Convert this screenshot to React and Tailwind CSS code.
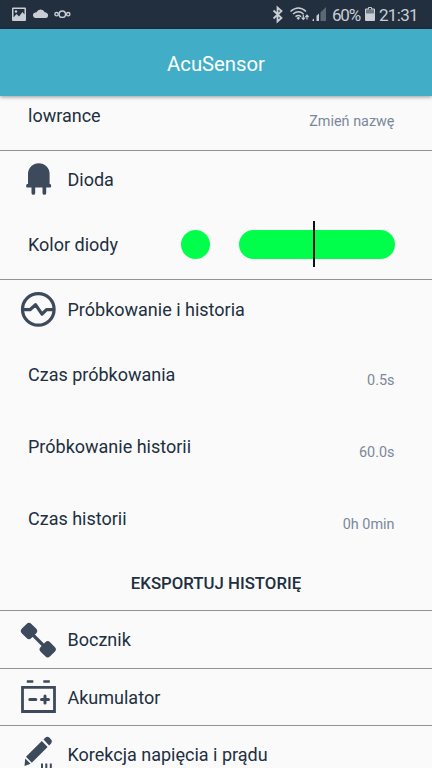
import React from 'react';

const StatusBar = () => (
  <div className="flex h-[29px] shrink-0 items-center justify-between bg-[#212f3f] pl-3 pr-[13px] text-[#c9ced4]">
    <svg className="h-[29px] w-[60px]" viewBox="12 0 60 29" fill="none">
      <path
        fillRule="evenodd"
        fill="#c9ced4"
        d="M13 7.500h12a1 1 0 0 1 1 1V20a1 1 0 0 1-1 1H13a1 1 0 0 1-1-1V8.500a1 1 0 0 1 1-1zM13.500 9v8.500l3-3.500 2.500 2.500 3.500-4.500 2 2.500V9z"
      />
      <circle cx="16" cy="11.500" r="1.200" fill="#c9ced4" />
      <path
        fill="#c9ced4"
        d="M35 18a2.800 2.800 0 0 1-.5-5.200 3 3 0 0 1 2-.6 4.600 4.600 0 0 1 8.300 0c1.700.3 3.200 1.300 3.300 3a2.600 2.600 0 0 1-2.100 2.800z"
      />
      <g stroke="#c9ced4" strokeWidth="1.400">
        <circle cx="62.300" cy="14.200" r="3.200" />
        <circle cx="56.600" cy="14.200" r="1.700" />
        <circle cx="68.200" cy="14.200" r="1.700" />
      </g>
    </svg>
    <div className="flex items-center">
      <svg className="h-[29px] w-[56px]" viewBox="271 0 56 29" fill="none" stroke="#c9ced4">
        <path strokeWidth="1.800" d="M273.500 10.500l8 7.500-4 3.500v-14l4 3.500-8 7.500" />
        <g strokeWidth="1.500">
          <path d="M290.500 11.500q8-7 15.500 0" />
          <path d="M293 14q5.500-4.500 10.500 0" />
          <path d="M295.500 16.700q3-2.400 5.500 0" />
        </g>
        <path fill="#c9ced4" stroke="none" d="M296.500 18l2-1.200 1.500 1.200-1.700 2z" />
        <path strokeWidth="1.200" d="M303.300 14.500v5M301.600 17.700l1.700 1.800 1.700-1.800M307 19.500v-4.300M305.400 17l1.600-1.800 1.600 1.800" />
        <path fill="#5b6772" stroke="none" d="M320.500 12.500l5.500-5.500v14h-5.500z" />
        <path fill="#c9ced4" stroke="none" d="M312.500 21v-1.300l1.500-1.200V21zM316.500 21v-5.300l2.500-2.200V21z" />
      </svg>
      <span className="ml-[5px] w-[29px] whitespace-nowrap pt-px text-[17px] leading-[28px] tracking-[-1.200px]">60%</span>
      <svg className="ml-[4px] h-[29px] w-[10px]" viewBox="365 0 10 29">
        <path fill="#717c86" d="M366 9h8v5h-8z" />
        <path fill="#c9ced4" d="M365 13.500h10V20a1 1 0 0 1-1 1h-8a1 1 0 0 1-1-1z" />
        <path fill="none" stroke="#c9ced4" d="M365.500 14V9h3V7.500h3V9h3v5" />
      </svg>
      <span className="ml-[4px] w-[40px] whitespace-nowrap pt-px text-[17px] leading-[28px] tracking-[-0.700px]">21:31</span>
    </div>
  </div>
);

const DiodeIcon = () => (
  <svg className="h-9 w-9" viewBox="0 0 36 36" fill="#3d4a5c">
    <path d="M8 22V12a10.800 10.800 0 0 1 21.600 0v10h.5a1.300 1.300 0 0 1 1 1.200v1.500a.8.800 0 0 1-.8.800H7a.8.800 0 0 1-.8-.800v-1.500a1.300 1.300 0 0 1 1-1.200z" />
    <path d="M11.500 25h3.700v6a1.850 1.850 0 0 1-3.700 0zM22.500 25h3.700v6a1.850 1.850 0 0 1-3.700 0z" />
  </svg>
);

const SamplingIcon = () => (
  <svg className="h-9 w-9" viewBox="0 0 36 36" fill="none" stroke="#3d4a5c" strokeWidth="3.200">
    <circle cx="18.300" cy="17.400" r="15.800" />
    <path strokeLinejoin="round" d="M2 17.700h8l5.500-5 6.500 9.500 4.500-4.500H34" />
  </svg>
);

const ShuntIcon = () => (
  <svg className="h-9 w-9" viewBox="0 0 36 36" fill="#3d4a5c">
    <path stroke="#3d4a5c" strokeWidth="3.200" d="M9 9l18 18" />
    <rect x="2.300" y="2.300" width="13.400" height="13.400" rx="3.400" transform="rotate(45 9 9)" />
    <rect x="21" y="20.600" width="13.400" height="13.400" rx="3.400" transform="rotate(45 27.700 27.300)" />
  </svg>
);

const BatteryIcon = () => (
  <svg className="h-9 w-9" viewBox="0 0 36 36" fill="none" stroke="#3d4a5c">
    <path strokeWidth="2.800" d="M2.500 8.300h32v24.200h-32z" />
    <path strokeWidth="2.500" d="M6.800 2.500h6.500M23.300 2.500h6.500" />
    <path strokeWidth="3" strokeLinecap="round" d="M9.800 20.500h6M21.500 20.500h7M25 17v7" />
  </svg>
);

const PencilIcon = () => (
  <svg className="h-9 w-9 overflow-visible" viewBox="0 0 36 36" fill="#3d4a5c">
    <path d="M23.500 2.500l2-2q2-1.400 3.800 0l1.800 1.900q1.500 1.900 0 4l-2 2zM21.800 4l5.800 5.900-15.800 15.800-5.800-5.900zM5.200 21.500l5.400 5.300-6.100 2.300z" />
    <path d="M21 26.500h2V36h-2zM25.300 26.500h2V36h-2zM29.800 26.500h2V36h-2z" />
  </svg>
);

const SectionHeader = ({ icon: Icon, title }) => (
  <div className="flex h-[57px] items-center pl-5">
    <Icon />
    <h2 className="ml-[11.500px] whitespace-nowrap pt-px text-[18px] leading-6">{title}</h2>
  </div>
);

const Setting = ({ name, value }) => (
  <div className="flex h-[72px] items-center justify-between pl-7 pr-[37.500px]">
    <span className="text-[18px] leading-6">{name}</span>
    <span className="mt-3 text-[14.400px] leading-5 text-[#7b889b]">{value}</span>
  </div>
);

const samplingSettings = [
  { name: 'Czas próbkowania', value: '0.5s' },
  { name: 'Próbkowanie historii', value: '60.0s' },
  { name: 'Czas historii', value: '0h 0min' },
];

const App = () => {
  return (
    <div className="flex h-[768px] w-[432px] flex-col overflow-hidden bg-[#fafafa] font-['Roboto',sans-serif] text-[#212f3f]">
      <StatusBar />
      <header className="z-10 flex h-[67px] shrink-0 items-center justify-center bg-[#41adc7] pt-[3px] shadow-[0_1px_4px_rgba(0,0,0,0.4)]">
        <h1 className="text-[20.300px] leading-6 text-white">AcuSensor</h1>
      </header>

      <main className="flex-1 overflow-hidden">
        <section className="flow-root h-[55px] border-b border-[#929292]">
          <div className="-mt-[16px]">
            <Setting name="lowrance" value="Zmień nazwę" />
          </div>
        </section>

        <section className="h-[129px] border-b border-[#929292]">
          <SectionHeader icon={DiodeIcon} title="Dioda" />
          <div className="mt-px flex h-[72px] items-center pl-7 pr-[37.500px]">
            <span className="flex-1 text-[18px] leading-6">Kolor diody</span>
            <span className="mb-[2px] h-[29px] w-[29px] rounded-full bg-[#00ff4b]" />
            <div className="mb-[2px] ml-[29px] flex h-[29px] w-[156px] items-center rounded-full bg-[#00ff4b]">
              <span className="ml-[74px] h-[46px] w-[2px] bg-[#111]" />
            </div>
          </div>
        </section>

        <section className="h-[331px] border-b border-[#929292] pt-px">
          <SectionHeader icon={SamplingIcon} title="Próbkowanie i historia" />
          <div className="mt-px">
            {samplingSettings.map((setting) => (
              <Setting key={setting.name} {...setting} />
            ))}
          </div>
          <button className="mt-[11px] block h-9 w-full text-center text-[16.800px] font-medium">
            EKSPORTUJ HISTORIĘ
          </button>
        </section>

        <section className="h-[57.500px] border-b border-[#929292]">
          <SectionHeader icon={ShuntIcon} title="Bocznik" />
        </section>
        <section className="h-[57.500px] border-b border-[#929292]">
          <SectionHeader icon={BatteryIcon} title="Akumulator" />
        </section>
        <section>
          <SectionHeader icon={PencilIcon} title="Korekcja napięcia i prądu" />
        </section>
      </main>
    </div>
  );
};

export default App;
